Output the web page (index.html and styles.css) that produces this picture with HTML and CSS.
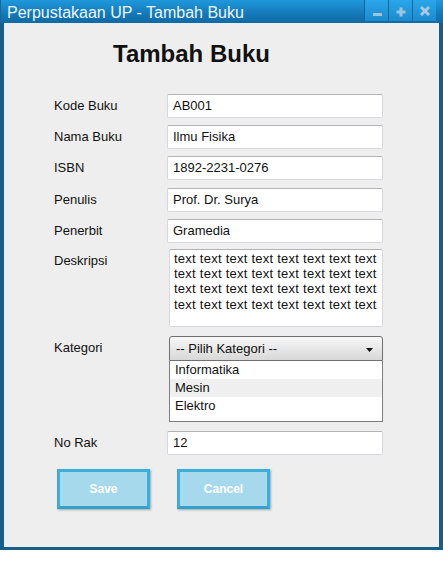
FILE: index.html
```html
<!DOCTYPE html>
<html>
<head>
<meta charset="utf-8">
<title>Perpustakaan UP - Tambah Buku</title>
<link rel="stylesheet" href="styles.css">
</head>
<body>
<div class="window">
  <div class="titlebar">
    <span class="title">Perpustakaan UP - Tambah Buku</span>
    <div class="tb-buttons">
      <span class="tb-btn"><svg width="23" height="21" viewBox="0 0 23 21"><rect x="8" y="13" width="9" height="3" fill="#9fc3dc"/></svg></span>
      <span class="tb-btn"><svg width="23" height="21" viewBox="0 0 23 21"><rect x="7.5" y="10.5" width="9" height="3" fill="#9fc3dc"/><rect x="10.5" y="7.5" width="3" height="9" fill="#9fc3dc"/></svg></span>
      <span class="tb-btn"><svg width="23" height="21" viewBox="0 0 23 21"><path d="M8 7 L16 15 M16 7 L8 15" stroke="#a6c9e0" stroke-width="3"/></svg></span>
    </div>
  </div>
  <div class="content">
    <h1 class="heading">Tambah Buku</h1>
    <div class="form">
      <div class="row"><span class="lbl">Kode Buku</span><div class="field">AB001</div></div>
      <div class="row"><span class="lbl">Nama Buku</span><div class="field">Ilmu Fisika</div></div>
      <div class="row"><span class="lbl">ISBN</span><div class="field">1892-2231-0276</div></div>
      <div class="row gap8"><span class="lbl">Penulis</span><div class="field">Prof. Dr. Surya</div></div>
      <div class="row"><span class="lbl">Penerbit</span><div class="field">Gramedia</div></div>
      <div class="row gap6"><span class="lbl">Deskripsi</span><div class="area">text text text text text text text text text text text text text text text text text text text text text text text text text text text text text text text text</div></div>
      <div class="row gap9"><span class="lbl">Kategori</span>
        <div class="select">
          <div class="sel-head"><span>-- Pilih Kategori --</span><svg class="arrow" width="7" height="4" viewBox="0 0 7 4"><path d="M0 0 H7 L3.5 4 Z" fill="#111"/></svg></div>
          <div class="sel-list">
            <div class="opt">Informatika</div>
            <div class="opt opt-hover">Mesin</div>
            <div class="opt">Elektro</div>
          </div>
        </div>
      </div>
      <div class="row gap9"><span class="lbl">No Rak</span><div class="field">12</div></div>
    </div>
    <div class="actions">
      <button class="btn">Save</button>
      <button class="btn">Cancel</button>
    </div>
  </div>
</div>
</body>
</html>
```
FILE: styles.css
```css
body {
  margin: 0;
  background: #ffffff;
  font-family: "Liberation Sans", Arial, sans-serif;
}

.window {
  width: 443px;
  height: 550px;
  background: #175f88;
  display: flex;
  flex-direction: column;
}

.titlebar {
  height: 23px;
  flex: none;
  display: flex;
  align-items: flex-start;
  background: linear-gradient(#1f98dc, #1479b8 60%, #0f6aa4);
  border-left: 1px solid #16689a;
}

.title {
  color: #eef6fb;
  font-size: 16px;
  line-height: 23px;
  padding-top: 1px;
  padding-left: 6px;
  white-space: nowrap;
}

.tb-buttons {
  margin-left: auto;
  margin-right: 7px;
  display: flex;
}

.tb-btn {
  display: block;
  width: 23px;
  height: 21px;
  background: linear-gradient(#2ba6ea, #1a8bcd);
  border-left: 1px solid #10679c;
}

.tb-btn svg {
  display: block;
}

.content {
  flex: 1;
  margin: 0 4px 3px 4px;
  background: #eeeeee;
  padding: 17px 0 0 50px;
}

.heading {
  margin: 0 0 26px 59px;
  font-size: 24px;
  line-height: 28px;
  font-weight: bold;
  color: #111111;
}

.form {
  display: flex;
  flex-direction: column;
  gap: 7px;
}

.row {
  display: flex;
  align-items: flex-start;
}

.gap8 { margin-top: 1px; }
.gap6 { margin-top: -1px; }
.gap9 { margin-top: 2px; }

.lbl {
  width: 113px;
  flex: none;
  font-size: 13px;
  line-height: 24px;
  color: #111111;
}

.field {
  width: 216px;
  height: 24px;
  box-sizing: border-box;
  background: #ffffff;
  border: 1px solid #d6d9de;
  border-top-color: #b4b4b4;
  border-radius: 2px;
  padding: 0 5px;
  font-size: 13px;
  line-height: 22px;
  color: #111111;
}

.area {
  margin-left: 2px;
  width: 214px;
  height: 78px;
  box-sizing: border-box;
  background: #ffffff;
  border: 1px solid #d6d9de;
  border-top-color: #b4b4b4;
  border-radius: 2px;
  padding: 1px 4px 0 4px;
  font-size: 13px;
  letter-spacing: 0.25px;
  line-height: 15.2px;
  color: #111111;
}

.select {
  margin-left: 2px;
  width: 214px;
}

.sel-head {
  height: 25px;
  box-sizing: border-box;
  border: 1px solid #6f6f6f;
  border-radius: 3px 3px 0 0;
  background: linear-gradient(#f8f8f8, #e9e9e9 45%, #d8d8d8);
  display: flex;
  align-items: center;
  padding: 0 9px 0 6px;
  font-size: 13px;
  color: #111111;
}

.sel-head .arrow {
  margin-left: auto;
  margin-top: 2px;
}

.sel-list {
  height: 61px;
  box-sizing: border-box;
  background: #ffffff;
  border: 1px solid #7d7d7d;
  border-top: none;
}

.opt {
  height: 18px;
  line-height: 18px;
  padding-left: 5px;
  font-size: 13px;
  color: #111111;
}

.opt-hover {
  background: #efefef;
}

.actions {
  display: flex;
  gap: 27px;
  margin: 14px 0 0 3px;
}

.btn {
  width: 93px;
  height: 40px;
  box-sizing: border-box;
  background: #a6d9ec;
  border: 3px solid #3aafdc;
  border-bottom-color: #30a2d0;
  border-radius: 0;
  box-shadow: 1px 1px 2px rgba(0, 0, 0, 0.3);
  color: #ffffff;
  font-family: "Liberation Sans", Arial, sans-serif;
  font-weight: bold;
  font-size: 12px;
  padding: 0;
}
```
